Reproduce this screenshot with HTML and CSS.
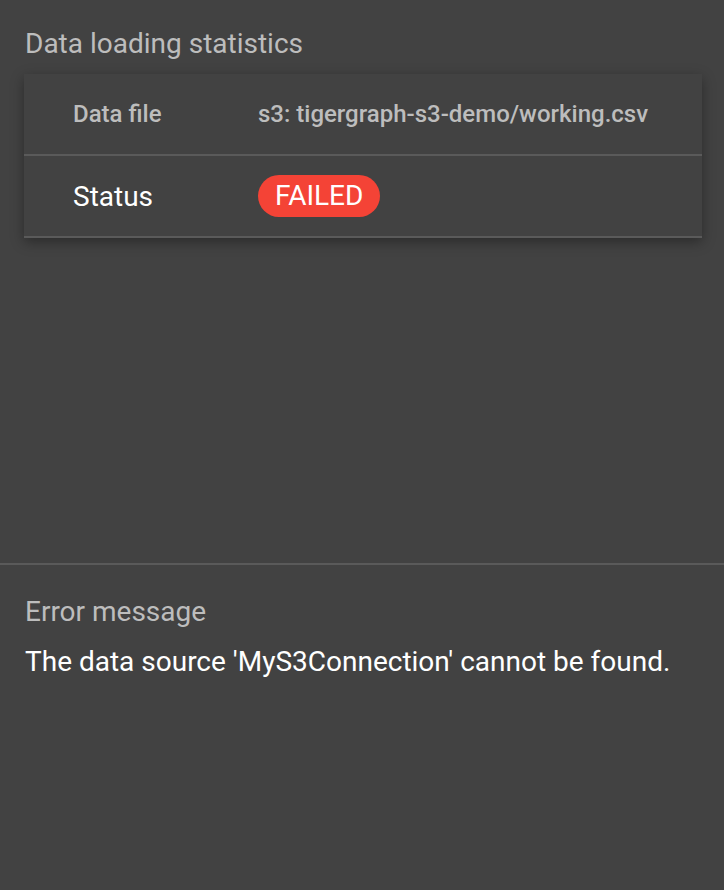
FILE: index.html
```html
<!DOCTYPE html>
<html>
<head>
<meta charset="utf-8">
<link rel="stylesheet" href="styles.css">
</head>
<body>
<div class="page">
  <section class="stats">
    <h2 class="section-title">Data loading statistics</h2>
    <div class="card">
      <div class="row">
        <div class="label label-head">Data file</div>
        <div class="value value-head">s3: tigergraph-s3-demo/working.csv</div>
      </div>
      <div class="row">
        <div class="label">Status</div>
        <div class="value"><span class="badge">FAILED</span></div>
      </div>
    </div>
  </section>
  <section class="error">
    <h2 class="section-title">Error message</h2>
    <p class="error-text">The data source 'MyS3Connection' cannot be found.</p>
  </section>
</div>
</body>
</html>
```
FILE: styles.css
```css
html, body {
  margin: 0;
  padding: 0;
  background: #424242;
  height: 100%;
}
body {
  font-family: Roboto, "Noto Sans", sans-serif;
  color: #ffffff;
}
.page {
  display: flex;
  flex-direction: column;
  height: 890px;
}
.stats {
  height: 565px;
  box-sizing: border-box;
  padding: 28px 22px 0 24px;
  border-bottom: 2px solid #5a5a5a;
}
.section-title {
  margin: 0 0 0 1px;
  font-size: 28px;
  font-weight: 400;
  line-height: 32px;
  color: #bdbdbd;
}
.card {
  margin-top: 14px;
  background: #424242;
  box-shadow: 0 4px 12px rgba(0,0,0,0.35);
}
.row {
  display: flex;
  align-items: center;
  height: 80px;
  border-bottom: 2px solid #5a5a5a;
}
.label {
  width: 185px;
  padding-left: 49px;
  font-size: 28px;
  color: #ffffff;
}
.label-head, .value-head {
  font-size: 24px;
  font-weight: 500;
  color: #bdbdbd;
}
.value {
  flex: 1;
}
.badge {
  display: inline-block;
  background: #f44336;
  color: #fff;
  font-size: 28px;
  line-height: 42px;
  padding: 0 17px;
  border-radius: 21px;
}
.error {
  padding: 31px 24px 0 24px;
}
.error-text {
  margin: 18px 0 0 1px;
  font-size: 28px;
  line-height: 32px;
  color: #ffffff;
}
```
